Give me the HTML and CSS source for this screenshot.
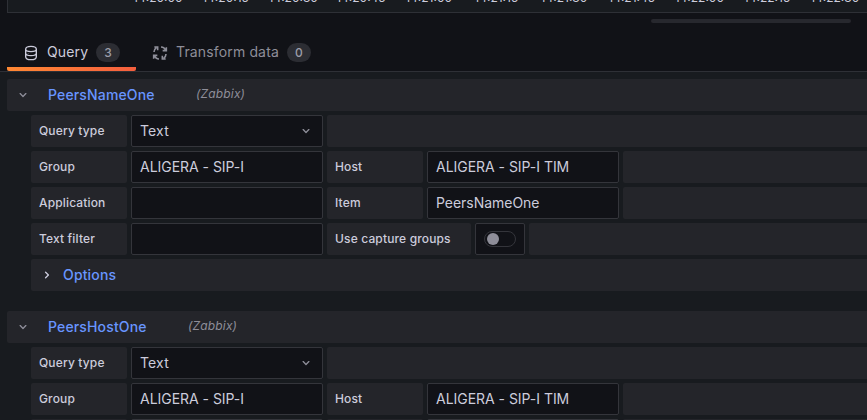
FILE: index.html
```html
<!DOCTYPE html>
<html lang="en">
<head>
<meta charset="utf-8">
<title>Panel editor</title>
<link rel="stylesheet" href="styles.css">
</head>
<body>
<svg class="defs" width="0" height="0">
  <symbol id="down" viewBox="0 0 24 24"><path d="M17 9.17a1 1 0 0 0-1.41 0L12 12.71 8.46 9.17a1 1 0 1 0-1.41 1.42l4.24 4.24a1 1 0 0 0 1.42 0L17 10.59a1 1 0 0 0 0-1.42Z"/></symbol>
  <symbol id="right" viewBox="0 0 24 24"><path d="M14.83 11.29 10.59 7.05a1 1 0 0 0-1.42 1.41L12.71 12l-3.54 3.54a1 1 0 1 0 1.42 1.41l4.24-4.24a1 1 0 0 0 0-1.42Z"/></symbol>
</svg>
<div class="chart">
  <div class="axis"><span>14:20:00</span><span>14:20:15</span><span>14:20:30</span><span>14:20:45</span><span>14:21:00</span><span>14:21:15</span><span>14:21:30</span><span>14:21:45</span><span>14:22:00</span><span>14:22:15</span><span>14:22:30</span></div>
</div>
<div class="splitter"><div class="handle"></div></div>
<nav class="tabs">
  <a class="tab active">
    <svg class="icon" viewBox="0 0 24 24" fill="none" stroke="currentColor" stroke-width="2"><path d="M4 6.500C4 2 8 2 12 2s8 0 8 4.500v11c0 4.500-4 4.500-8 4.500s-8 0-8-4.500ZM4 6.500C4 9 8 10 12 10s8-1 8-3.500M4 12c0 2.500 4 4 8 4s8-1.500 8-4M8 12.500v.1M8 18v.1"/></svg>
    <span class="name">Query</span><span class="count">3</span>
  </a>
  <a class="tab">
    <svg class="icon" viewBox="0 0 24 24" fill="none" stroke="currentColor" stroke-width="2.4"><path d="M3 10.500c0-3 1-4.500 3.500-6.500M3.500 3H8.500v5M13.500 3c3.500 0 6 2.500 7 5.500M16 8.500h5.500V3.500M21 13.500c0 3-1 4.500-3.500 6.500M20.500 21h-5v-5M10.500 21c-3.500 0-6-2.500-7-5.500M8 15.500H2.500v5"/></svg>
    <span class="name">Transform data</span><span class="count">0</span>
  </a>
</nav>
<main class="queries">
  <section class="query">
    <header class="head"><svg class="chev"><use href="#down"/></svg><span class="title">PeersNameOne</span><em>(Zabbix)</em></header>
    <div class="body">
      <div class="row"><label class="label">Query type</label><div class="field select">Text<svg class="chev"><use href="#down"/></svg></div><div class="fill"></div></div>
      <div class="row"><label class="label">Group</label><div class="field">ALIGERA - SIP-I</div><label class="label">Host</label><div class="field">ALIGERA - SIP-I TIM</div><div class="fill"></div></div>
      <div class="row"><label class="label">Application</label><div class="field"></div><label class="label">Item</label><div class="field">PeersNameOne</div><div class="fill"></div></div>
      <div class="row"><label class="label">Text filter</label><div class="field"></div><label class="label wide">Use capture groups</label><div class="switch"><span class="track"></span></div><div class="fill"></div></div>
      <div class="options"><svg class="chev"><use href="#right"/></svg><span class="title">Options</span></div>
    </div>
  </section>
  <section class="query">
    <header class="head"><svg class="chev"><use href="#down"/></svg><span class="title">PeersHostOne</span><em>(Zabbix)</em></header>
    <div class="body">
      <div class="row"><label class="label">Query type</label><div class="field select">Text<svg class="chev"><use href="#down"/></svg></div><div class="fill"></div></div>
      <div class="row"><label class="label">Group</label><div class="field">ALIGERA - SIP-I</div><label class="label">Host</label><div class="field">ALIGERA - SIP-I TIM</div><div class="fill"></div></div>
      <div class="row"><label class="label"></label><div class="field"></div><label class="label"></label><div class="field"></div><div class="fill"></div></div>
    </div>
  </section>
</main>
</body>
</html>
```
FILE: styles.css
```css
* { box-sizing: border-box; }
body {
  margin: 0;
  height: 420px;
  overflow: hidden;
  background: #111217;
  color: #ccccdc;
  font: 14px/22px Inter, "Liberation Sans", sans-serif;
  letter-spacing: 0.15px;
}
.defs { display: block; }
.chart {
  height: 13px;
  margin-left: 7px;
  background: #181b1f;
  border-left: 1px solid #2e3036;
  border-bottom: 1px solid #2e3036;
  overflow: hidden;
}
.axis {
  display: flex;
  margin: -9px 0 0 116px;
  font-size: 12px;
  line-height: 14px;
  letter-spacing: 0;
}
.axis span { flex: 0 0 67.7px; text-align: center; }
.splitter { height: 20px; padding-top: 6px; }
.handle { width: 200px; height: 4px; margin-left: 651px; border-radius: 2px; background: #27282e; }
.tabs {
  display: flex;
  height: 39px;
  padding-left: 7px;
  border-bottom: 1px solid #2e3036;
}
.tab {
  display: flex;
  align-items: center;
  width: 129px;
  height: 38px;
  padding-left: 16px;
  color: #8e8e99;
}
.tab + .tab { width: auto; }
.active {
  color: #ccccdc;
  background: linear-gradient(90deg, #ff8833, #f55f3e) bottom / 100% 4px no-repeat;
  border-radius: 2px;
}
.icon { width: 16px; height: 16px; margin-top: 2px; }
.name { margin-left: 8px; }
.count {
  margin-left: 8px;
  padding: 0 8px;
  height: 19px;
  border-radius: 10px;
  background: #2c2d33;
  color: #9d9da9;
  font-size: 12px;
  line-height: 19px;
  font-weight: 500;
}
.queries { height: 348px; padding: 7px 0 0 7px; background: #181b1f; overflow: hidden; }
.query { margin-bottom: 20px; }
.head, .options {
  display: flex;
  align-items: center;
  height: 32px;
  padding-left: 8px;
  border-radius: 2px 0 0 2px;
  background: #24252a;
}
.chev { width: 16px; height: 16px; fill: #8e8e99; flex: none; }
.options .chev { fill: #ccccdc; }
.title { color: #6895ff; font-weight: 500; }
.head .title { margin-left: 17px; }
.options .title { margin-left: 8px; }
em { margin: -3px 0 0 41.4px; color: #8e8e99; font-size: 12px; }
.body { display: grid; gap: 4px; margin: 4px 0 0 24px; }
.row { display: flex; gap: 4px; height: 32px; }
.label {
  flex: none;
  width: 96px;
  padding-left: 8px;
  border-radius: 2px;
  background: #24252a;
  font-size: 12px;
  line-height: 32px;
  font-weight: 500;
}
.wide { width: 144px; }
.field, .switch {
  flex: none;
  width: 192px;
  padding: 0 8px;
  border: 1px solid #34353b;
  border-radius: 2px;
  background: #111217;
  line-height: 30px;
  letter-spacing: -0.03px;
}
.select, .switch { display: flex; align-items: center; justify-content: space-between; }
.select { letter-spacing: 0.15px; }
.switch { width: 50px; }
.track {
  width: 32px;
  height: 16px;
  padding: 1px 2px;
  border: 1px solid #34353b;
  border-radius: 8px;
}
.track::before { content: ""; display: block; width: 12px; height: 12px; border-radius: 50%; background: #8e8e99; }
.fill { flex: 1; border-radius: 2px 0 0 2px; background: #24252a; }
```
